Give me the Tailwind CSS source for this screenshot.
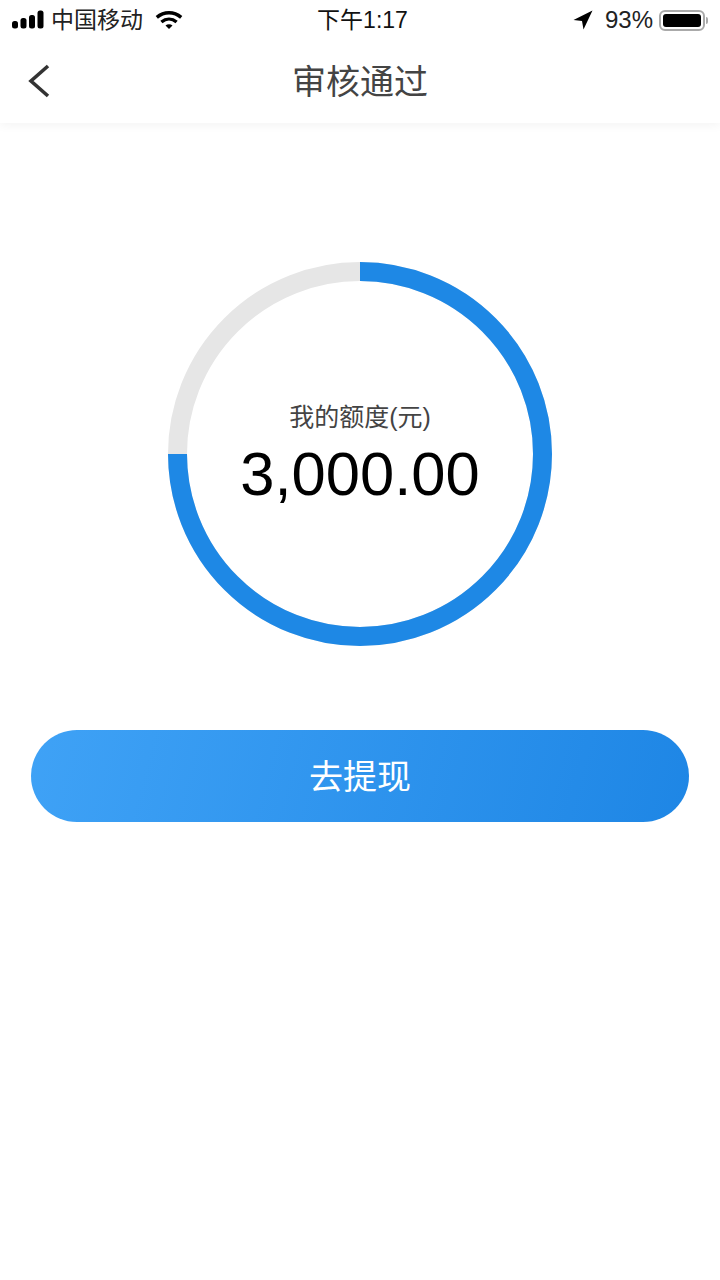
<!DOCTYPE html>
<html>
<head>
<meta charset="utf-8" />
<title>审核通过</title>
<script src="https://cdn.jsdelivr.net/npm/@tailwindcss/browser@4"></script>
</head>
<body class="bg-white font-['Liberation_Sans','Noto_Sans_CJK_SC',sans-serif]">
<div class="w-[720px] h-[1280px] overflow-hidden flex flex-col">

	<!-- status bar -->
	<div class="h-10 flex items-center justify-between text-black pl-3 pr-3 relative z-10 bg-white">
		<div class="flex items-center">
			<svg width="32" height="20" viewBox="0 0 32 20" fill="#000">
				<rect x="0" y="11" width="6" height="7.5" rx="2.5" />
				<rect x="8.5" y="8" width="6" height="10.5" rx="2.5" />
				<rect x="17" y="5" width="6" height="13.5" rx="2.5" />
				<rect x="25.5" y="0.5" width="6" height="18" rx="2.5" />
			</svg>
			<span class="ml-[7px] text-[23px] leading-none text-[#222]">中国移动</span>
			<svg class="ml-3" width="28" height="20" viewBox="0 0 28 20" fill="none" stroke="#000" stroke-width="3.4">
				<path d="M1.8 7.4 C9 1.2 19 1.2 26.2 7.4" />
				<path d="M6.4 12 C11 8.2 17 8.2 21.6 12" />
				<path d="M10.5 15.4 L14 19 L17.5 15.4 C15.5 13.8 12.5 13.8 10.5 15.4 Z" fill="#000" stroke="none" />
			</svg>
		</div>
		<div class="absolute left-[5px] right-0 text-center text-[23px] leading-none text-[#111]">下午1:17</div>
		<div class="flex items-center relative">
			<svg width="20" height="20" viewBox="0 0 20 20" fill="#000"><path d="M19.5 0.5 L0.5 10 L9 11 L10.5 19.5 Z" /></svg>
			<span class="ml-[12px] text-[24px] leading-none text-[#222]">93%</span>
			<div class="ml-[6px] w-[46px] h-[21px] rounded-[6px] border-2 border-[#aaa] p-[2px]">
				<div class="w-[38px] h-full rounded-[3px] bg-black"></div>
			</div>
			<div class="ml-[1px] w-[2px] h-[7px] rounded-r bg-[#aaa]"></div>
		</div>
	</div>

	<!-- nav -->
	<div class="h-[83px] flex items-center justify-center relative shadow-[0_2px_10px_rgba(0,0,0,0.05)]">
		<svg class="absolute left-[27px] top-[24px]" width="24" height="34" viewBox="0 0 24 34" fill="none" stroke="#333" stroke-width="3.6">
			<path d="M21 2 L4 17 L21 32" />
		</svg>
		<span class="text-[34px] leading-none text-[#444]">审核通过</span>
	</div>

	<!-- quota ring -->
	<div class="mt-[139px] mx-auto relative w-[384px] h-[384px]">
		<svg width="384" height="384" viewBox="0 0 384 384" fill="none" stroke-width="19">
			<circle cx="192" cy="192" r="182.5" stroke="#e6e6e6" />
			<path d="M192 9.5 A182.5 182.5 0 1 1 9.5 192" stroke="#1e88e5" />
		</svg>
		<div class="absolute inset-0 flex flex-col items-center">
			<div class="mt-[141px] text-[25px] leading-[28px] text-[#444]">我的额度(元)</div>
			<div class="mt-[7px] text-[61.5px] leading-[72px] text-black">3,000.00</div>
		</div>
	</div>

	<!-- action -->
	<button class="mt-[84px] mx-[31px] h-[92px] pt-[3px] rounded-full bg-linear-[105deg,#3fa2f6,#1e86e5] text-white text-[34px]">去提现</button>
</div>
</body>
</html>
